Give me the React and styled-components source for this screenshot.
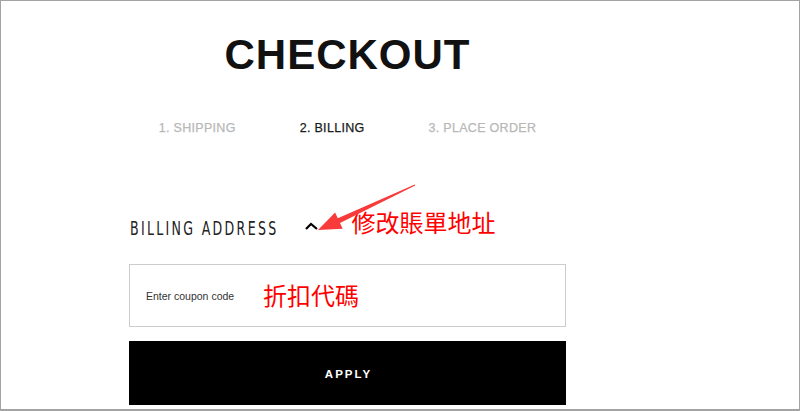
import React from 'react';
import styled, { createGlobalStyle } from 'styled-components';

const GlobalStyle = createGlobalStyle`
  html, body { margin: 0; padding: 0; background: #fff; }
  body { font-family: "Liberation Sans", Arial, sans-serif; }
`;

const Frame = styled.div`
  position: relative;
  box-sizing: border-box;
  width: 800px;
  height: 411px;
  border: 1px solid #a3a3a3;
  border-bottom-width: 2px;
  overflow: hidden;
  background: #fff;
`;

const Column = styled.div`
  width: 437px;
  margin-left: 128px;
  display: flex;
  flex-direction: column;
`;

const Title = styled.h1`
  margin: 33px 0 0;
  font-family: "Liberation Sans", Arial, sans-serif;
  font-weight: 700;
  font-size: 42px;
  line-height: 42px;
  letter-spacing: 1px;
  text-align: center;
  color: #111;
`;

const Steps = styled.div`
  margin-top: 46px;
  display: flex;
  justify-content: center;
  gap: 64px;
`;

const Step = styled.span`
  font-size: 12.5px;
  line-height: 13px;
  letter-spacing: 0.3px;
  -webkit-text-stroke: 0.25px currentColor;
  color: ${p => (p.$active ? '#1a1a1a' : '#b8b8b8')};
`;

const BillingRow = styled.div`
  margin-top: 78px;
  height: 30px;
  display: flex;
  align-items: center;
  padding-left: 1px;
`;

const Heading = styled.h2`
  margin: 0;
  font-family: "DejaVu Sans Condensed", "DejaVu Sans", sans-serif;
  font-weight: 400;
  font-size: 14px;
  line-height: 30px;
  letter-spacing: 2.3px;
  color: #222;
  transform: scaleY(1.38);
`;

const Chevron = styled.svg`
  margin-left: 26px;
  width: 14px;
  height: 10px;
  margin-top: -4px;
  flex: none;
`;

const Note = styled.span`
  font-family: "Noto Sans CJK TC", "Noto Sans CJK SC", sans-serif;
  font-size: 24px;
  line-height: 30px;
  color: #ff0000;
  margin-left: ${p => p.$gap}px;
  margin-bottom: ${p => p.$lift || 0}px;
`;

const Field = styled.div`
  margin-top: 21px;
  box-sizing: border-box;
  height: 63px;
  border: 1px solid #cccccc;
  display: flex;
  align-items: center;
  padding-left: 16px;
`;

const CouponInput = styled.input`
  width: 117px;
  padding: 0;
  border: none;
  outline: none;
  background: transparent;
  font-family: "Liberation Sans", Arial, sans-serif;
  font-size: 10.5px;
  color: #333;
  &::placeholder { color: #333; opacity: 1; }
`;

const ApplyButton = styled.button`
  margin-top: 14px;
  height: 64px;
  border: none;
  background: #000;
  color: #fff;
  font-family: "Liberation Sans", Arial, sans-serif;
  font-weight: 700;
  font-size: 11.5px;
  letter-spacing: 2px;
  padding: 1px 0 0 2px;
  cursor: pointer;
`;

const ArrowLayer = styled.svg`
  position: absolute;
  left: 0;
  top: 0;
  pointer-events: none;
`;

export default function App() {
  return (
    <>
      <GlobalStyle />
      <Frame>
        <Column>
          <Title>CHECKOUT</Title>
          <Steps>
            <Step>1. SHIPPING</Step>
            <Step $active>2. BILLING</Step>
            <Step>3. PLACE ORDER</Step>
          </Steps>
          <BillingRow>
            <Heading>BILLING ADDRESS</Heading>
            <Chevron viewBox="0 0 14 10">
              <polyline points="1,8 6,3 12,8" fill="none" stroke="#000" strokeWidth="2.2" />
            </Chevron>
            <Note $gap={33} $lift={12}>修改賬單地址</Note>
          </BillingRow>
          <Field>
            <CouponInput placeholder="Enter coupon code" />
            <Note $gap={0} $lift={2}>折扣代碼</Note>
          </Field>
          <ApplyButton>APPLY</ApplyButton>
        </Column>
        <ArrowLayer width="800" height="411" viewBox="0 0 800 411">
          <polygon
            points="317,229 341.7,227.8 339,221.9 414.2,184.6 413.8,183.4 336.8,217.3 334.1,211.4"
            fill="#f83a3a"
          />
        </ArrowLayer>
      </Frame>
    </>
  );
}
